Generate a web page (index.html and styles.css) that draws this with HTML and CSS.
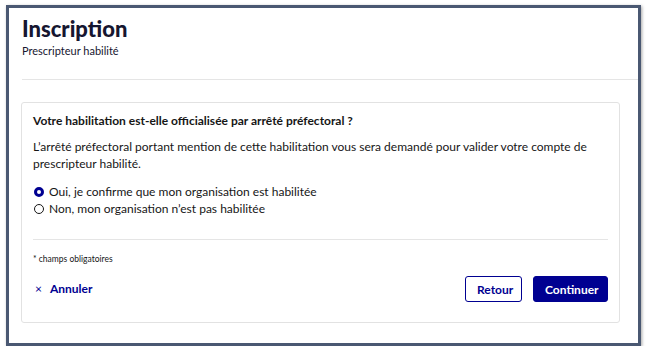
FILE: index.html
```html
<!DOCTYPE html>
<html lang="fr">
<head>
<meta charset="utf-8">
<title>Inscription</title>
<link rel="stylesheet" href="styles.css">
</head>
<body>
<div class="frame">
  <header class="page-head">
    <h1 class="title">Inscription</h1>
    <p class="subtitle">Prescripteur habilité</p>
  </header>
  <div class="content">
    <form class="card">
      <fieldset class="group">
        <legend class="question">Votre habilitation est-elle officialisée par arrêté préfectoral ?</legend>
        <p class="hint">L’arrêté préfectoral portant mention de cette habilitation vous sera demandé pour valider votre compte de prescripteur habilité.</p>
        <label class="radio"><span class="dot checked"></span>Oui, je confirme que mon organisation est habilitée</label>
        <label class="radio"><span class="dot"></span>Non, mon organisation n’est pas habilitée</label>
      </fieldset>
      <hr class="sep">
      <p class="required">* champs obligatoires</p>
      <div class="actions">
        <a class="cancel"><span class="x">×</span>Annuler</a>
        <div class="btns">
          <button type="button" class="btn secondary">Retour</button>
          <button type="button" class="btn primary">Continuer</button>
        </div>
      </div>
    </form>
  </div>
</div>
</body>
</html>
```

FILE: styles.css
```css
* { box-sizing: border-box; }
html, body { margin: 0; padding: 0; background: #ffffff; }
body { font-family: Lato, "Noto Sans", sans-serif; color: #161616; }

.frame {
  margin: 5px 0 0 6px;
  width: 635px;
  height: 341px;
  border: 3px solid #4a5872;
  box-shadow: 1px 1px 3px rgba(0,0,0,0.35);
  background: #fff;
  display: flex;
  flex-direction: column;
}

.page-head {
  margin-left: 13px;
  border-bottom: 1px solid #e5e5e5;
  padding-top: 6px;
  height: 72px;
}
.title {
  margin: 0;
  font-size: 22px;
  line-height: 30px;
  font-weight: 900;
  color: #161630;
}
.subtitle {
  margin: 0;
  font-size: 11px;
  line-height: 14px;
  color: #161630;
}

.content { padding: 22px 18px 0 12px; }

.card {
  border: 1px solid #e2e2e2;
  border-radius: 3px;
  height: 221px;
  padding: 10px 11px 0 11px;
}

.group { border: 0; margin: 0; padding: 0; }
.question {
  padding: 0;
  font-size: 12px;
  font-weight: 700;
  line-height: 16px;
  color: #161616;
}
.hint {
  margin: 9px 0 11px;
  font-size: 12px;
  line-height: 17px;
  color: #161616;
}
.radio {
  display: flex;
  align-items: center;
  font-size: 12px;
  line-height: 17px;
  color: #161616;
}
.dot {
  width: 10px;
  height: 10px;
  border-radius: 50%;
  border: 1px solid #161616;
  margin: 0 5px 0 1px;
  flex: none;
}
.dot.checked {
  border: 3px solid #000091;
}

.sep {
  border: 0;
  border-top: 1px solid #e5e5e5;
  margin: 22px 0 0;
}
.required {
  margin: 14px 0 0;
  font-size: 8.5px;
  line-height: 10px;
  color: #161616;
}
.actions {
  display: flex;
  justify-content: space-between;
  align-items: center;
  margin-top: 12px;
}
.cancel {
  color: #000091;
  font-weight: 700;
  font-size: 12px;
  display: flex;
  align-items: center;
  padding-left: 2px;
  margin-top: -2px;
}
.x { font-weight: 400; font-size: 12px; margin-right: 8px; }
.btns { display: flex; gap: 11px; }
.btn {
  font-family: inherit;
  font-size: 12px;
  font-weight: 700;
  height: 26px;
  border-radius: 3px;
  padding: 0 11px;
}
.btn.secondary {
  background: #fff;
  color: #000091;
  border: 1px solid #000091;
  width: 57px;
}
.btn.primary {
  background: #000091;
  color: #fff;
  border: 1px solid #000091;
  width: 75px;
}
```
